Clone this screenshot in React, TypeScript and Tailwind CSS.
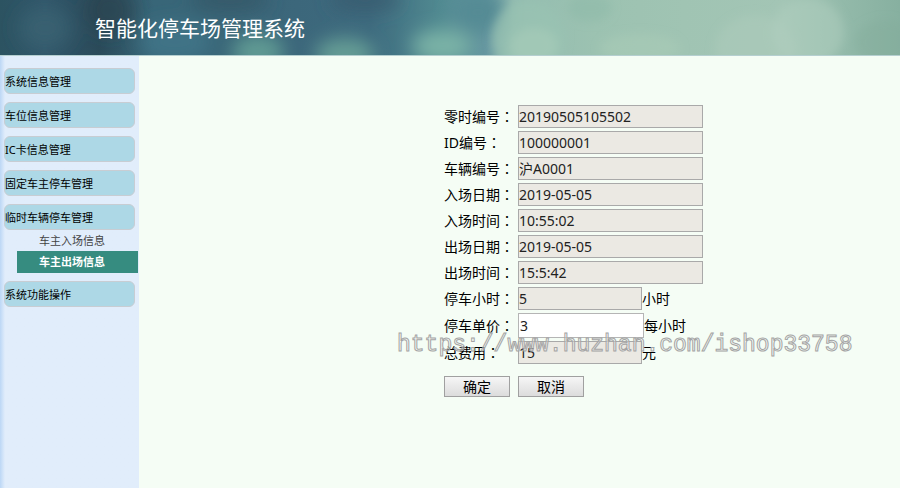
import { useState } from "react";

type Field = {
  id: string;
  label: string;
  value: string;
  unit?: string;
};

const fields: Field[] = [
  { id: "tempNo", label: "零时编号", value: "20190505105502" },
  { id: "cardNo", label: "ID编号", value: "100000001" },
  { id: "plate", label: "车辆编号", value: "沪A0001" },
  { id: "inDate", label: "入场日期", value: "2019-05-05" },
  { id: "inTime", label: "入场时间", value: "10:55:02" },
  { id: "outDate", label: "出场日期", value: "2019-05-05" },
  { id: "outTime", label: "出场时间", value: "15:5:42" },
  { id: "hours", label: "停车小时", value: "5", unit: "小时" },
];

function HeaderBackdrop() {
  return (
    <svg
      className="absolute inset-0 h-full w-full"
      viewBox="0 0 900 55"
      preserveAspectRatio="none"
      aria-hidden="true"
    >
      <defs>
        <linearGradient id="sky" x1="0" x2="1" y1="0" y2="0">
          <stop offset="0" stopColor="#2c5361" />
          <stop offset="0.05" stopColor="#30566a" />
          <stop offset="0.11" stopColor="#2b4b5a" />
          <stop offset="0.17" stopColor="#386678" />
          <stop offset="0.24" stopColor="#396678" />
          <stop offset="0.33" stopColor="#3c677b" />
          <stop offset="0.41" stopColor="#3d6a7e" />
          <stop offset="0.49" stopColor="#518a91" />
          <stop offset="0.54" stopColor="#6596a0" />
          <stop offset="0.57" stopColor="#93bcb0" />
          <stop offset="0.66" stopColor="#9cc2b1" />
          <stop offset="0.76" stopColor="#a0c4b3" />
          <stop offset="0.87" stopColor="#a3c5b5" />
          <stop offset="0.94" stopColor="#92b9a9" />
          <stop offset="1" stopColor="#87b0a0" />
        </linearGradient>
        <filter id="soft" x="-80%" y="-150%" width="260%" height="400%">
          <feGaussianBlur stdDeviation="9" />
        </filter>
        <filter id="edge" x="-20%" y="-20%" width="140%" height="140%">
          <feGaussianBlur stdDeviation="5" />
        </filter>
      </defs>
      <rect width="900" height="55" fill="url(#sky)" />
      <g filter="url(#soft)">
        <ellipse cx="45" cy="28" rx="26" ry="22" fill="#3a6474" opacity="0.7" />
        <ellipse cx="110" cy="10" rx="24" ry="24" fill="#28424f" opacity="0.7" />
        <ellipse cx="175" cy="42" rx="36" ry="20" fill="#43798b" opacity="0.7" />
        <ellipse cx="230" cy="0" rx="40" ry="12" fill="#355565" opacity="0.8" />
        <ellipse cx="258" cy="52" rx="26" ry="18" fill="#64a096" opacity="0.9" />
        <ellipse cx="345" cy="54" rx="30" ry="16" fill="#6aa398" opacity="0.9" />
        <ellipse cx="365" cy="0" rx="36" ry="12" fill="#385b6e" opacity="0.8" />
        <ellipse cx="442" cy="46" rx="30" ry="16" fill="#80b7a8" opacity="0.9" />
        <ellipse cx="478" cy="12" rx="26" ry="22" fill="#558b94" />
      </g>
      <g filter="url(#edge)">
        <ellipse cx="528" cy="38" rx="36" ry="38" fill="#98c3b2" opacity="0.7" />
        <ellipse cx="534" cy="46" rx="24" ry="18" fill="#acd0bc" opacity="0.5" />
        <ellipse cx="590" cy="8" rx="22" ry="14" fill="#88b5a4" opacity="0.35" />
        <ellipse cx="640" cy="48" rx="40" ry="14" fill="#abcdb8" opacity="0.5" />
        <ellipse cx="755" cy="50" rx="40" ry="35" fill="#aecbbb" opacity="0.5" />
        <ellipse cx="808" cy="32" rx="36" ry="34" fill="#b2d0bf" opacity="0.5" />
        <ellipse cx="885" cy="42" rx="30" ry="22" fill="#83ad9c" opacity="0.4" />
      </g>
    </svg>
  );
}

function MenuButton({ children }: { children: string }) {
  return (
    <button
      type="button"
      className="mr-1 ml-1 block h-[26px] rounded-md border border-[#c8cdd3] bg-[#add8e6] pt-0.5 text-left text-[11px] text-black"
    >
      {children}
    </button>
  );
}

function FieldLabel({ htmlFor, children }: { htmlFor: string; children: string }) {
  return (
    <label htmlFor={htmlFor} className="w-[74px] shrink-0">
      {children}
      <span className="font-['Noto_Sans_CJK_TC',sans-serif]">：</span>
    </label>
  );
}

export default function App() {
  const [price, setPrice] = useState("3");

  return (
    <div className="relative flex min-h-screen flex-col bg-[#f5fdf5] font-['Noto_Sans','Noto_Sans_CJK_SC',sans-serif] text-black">
      <header className="relative flex h-14 items-center border-b border-[#b5cfd0] pl-[95px]">
        <HeaderBackdrop />
        <h1 className="relative text-[21px] leading-8 text-white">智能化停车场管理系统</h1>
      </header>

      <div className="flex flex-1">
        <nav className="flex w-[139px] shrink-0 flex-col gap-2 bg-[#e1edfb] bg-linear-to-r from-[#bcd7f5] to-[#e1edfb] to-[5px] pt-3">
          <MenuButton>系统信息管理</MenuButton>
          <MenuButton>车位信息管理</MenuButton>
          <MenuButton>IC卡信息管理</MenuButton>
          <MenuButton>固定车主停车管理</MenuButton>
          <div className="flex flex-col">
            <MenuButton>临时车辆停车管理</MenuButton>
            <a href="#in" className="ml-[17px] pl-[22px] text-[11px] leading-[21px] text-[#444]">
              车主入场信息
            </a>
            <a
              href="#out"
              aria-current="page"
              className="mr-px ml-[17px] bg-[#368c80] pl-[22px] text-[11px] leading-[22px] font-bold text-white"
            >
              车主出场信息
            </a>
          </div>
          <MenuButton>系统功能操作</MenuButton>
        </nav>

        <main className="flex-1 pt-[49px] pl-[calc(34%-1px)]">
          <form className="flex flex-col gap-[3px] text-sm" onSubmit={(e) => e.preventDefault()}>
            {fields.map((f) => (
              <div key={f.id} className="flex items-center leading-[23px]">
                <FieldLabel htmlFor={f.id}>{f.label}</FieldLabel>
                <input
                  id={f.id}
                  readOnly
                  value={f.value}
                  className={`h-[23px] border border-[#a9a9a9] bg-[#ebe9e3] text-[#222] outline-none ${
                    f.unit ? "w-[124px]" : "w-[185px]"
                  }`}
                />
                {f.unit && <span>{f.unit}</span>}
              </div>
            ))}
            <div className="flex items-center leading-[23px]">
              <FieldLabel htmlFor="price">停车单价</FieldLabel>
              <input
                id="price"
                value={price}
                onChange={(e) => setPrice(e.target.value)}
                className="h-[25px] w-[126px] border border-[#b5b5b5] bg-white px-px text-[#222] outline-none"
              />
              <span>每小时</span>
            </div>
            <div className="flex items-center leading-[23px]">
              <FieldLabel htmlFor="total">总费用</FieldLabel>
              <input
                id="total"
                readOnly
                value="15"
                className="h-[23px] w-[124px] border border-[#a9a9a9] bg-[#ebe9e3] text-[#222] outline-none"
              />
              <span>元</span>
            </div>
            <div className="flex gap-2 pt-[9px]">
              <button
                type="submit"
                className="h-[21px] w-[66px] border border-[#a0a0a0] bg-linear-to-b from-[#f6f6f6] to-[#dcdcdc] leading-[19px]"
              >
                确定
              </button>
              <button
                type="button"
                className="h-[21px] w-[66px] border border-[#a0a0a0] bg-linear-to-b from-[#f6f6f6] to-[#dcdcdc] leading-[19px]"
              >
                取消
              </button>
            </div>
          </form>
        </main>
      </div>

      <div className="pointer-events-none absolute top-[329px] left-[397px] font-['Liberation_Mono',monospace] text-[23px] leading-8 whitespace-nowrap text-white/40 [-webkit-text-stroke:1px_#a4a4a4]">
        https://www.huzhan.com/ishop33758
      </div>
    </div>
  );
}
